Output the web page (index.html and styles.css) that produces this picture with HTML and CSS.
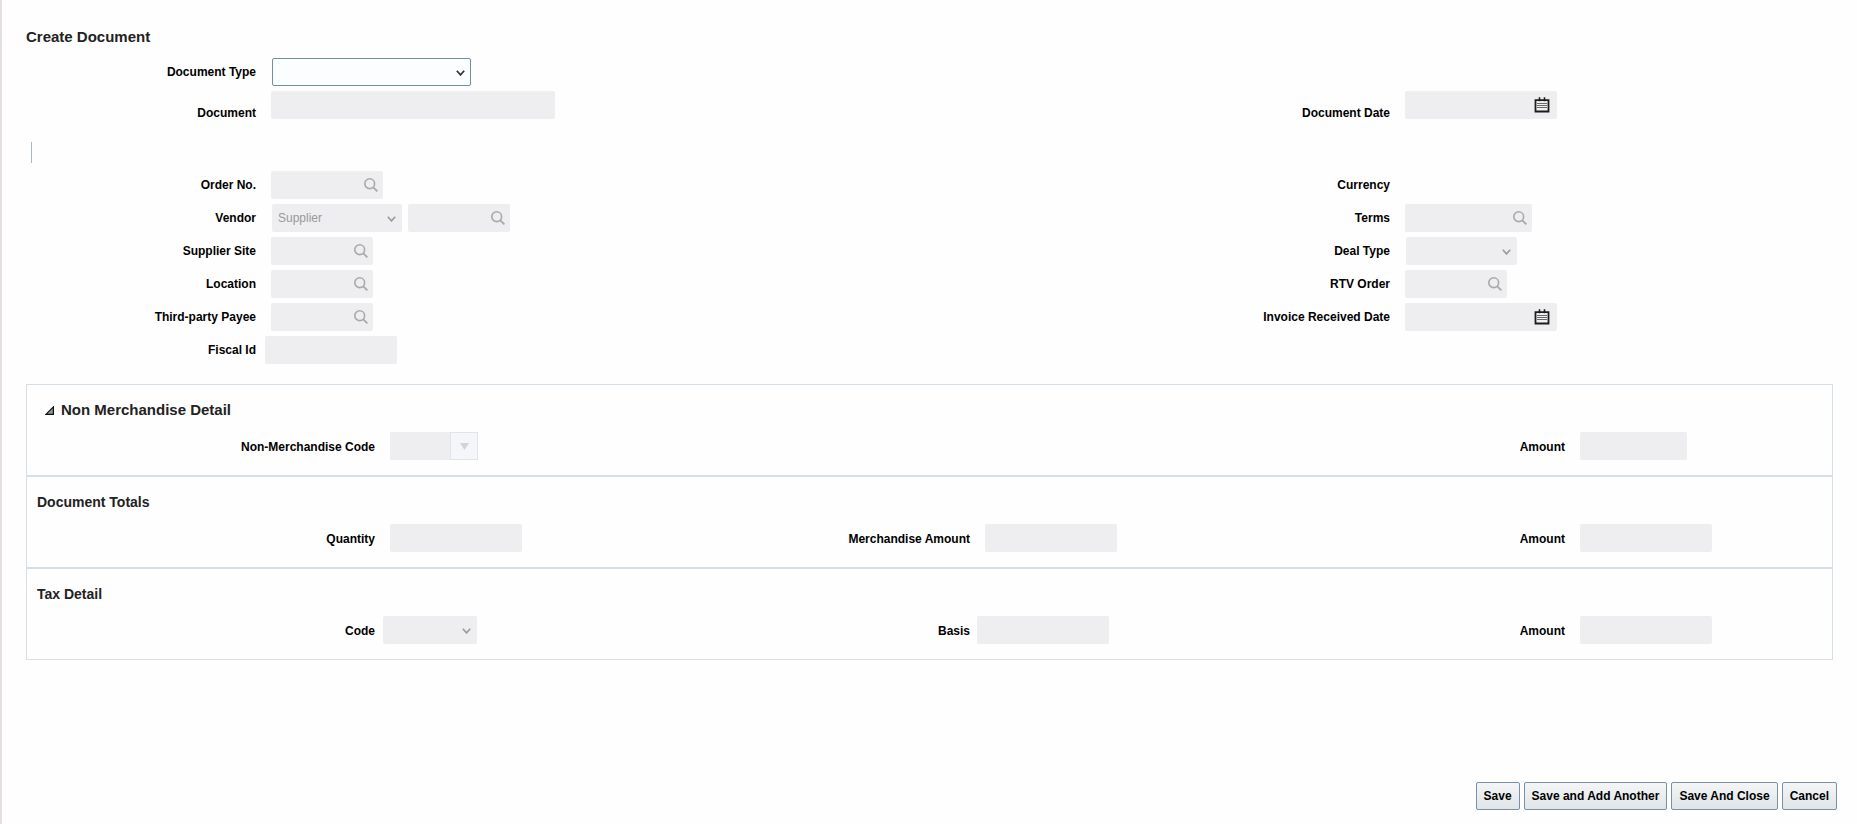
FILE: index.html
```html
<!DOCTYPE html>
<html lang="en">
<head>
<meta charset="utf-8">
<title>Create Document</title>
<link rel="stylesheet" href="styles.css">
</head>
<body>
<svg class="sprite" aria-hidden="true">
  <symbol id="search" viewBox="0 0 14 14"><circle cx="5.7" cy="5.7" r="4.9" fill="none" stroke="currentColor" stroke-width="1.6"/><path d="M9.3 9.3 13.4 13.4" stroke="currentColor" stroke-width="1.8"/></symbol>
  <symbol id="chevron" viewBox="0 0 9 6"><path d="M.8 .8 4.500 4.900 8.200 .8" fill="none" stroke="currentColor" stroke-width="1.7"/></symbol>
  <symbol id="calendar" viewBox="0 0 16 16"><path d="M1.500 3.200h13v11.300h-13z" fill="#f0f0f1" stroke="#1c1c1c" stroke-width="1.8"/><path d="M5.500 .3v4M10.500 .3v4" stroke="#1c1c1c" stroke-width="1.6"/><path d="M3 6.500h10M3 8.500h10M3 10.500h10" stroke="#6a6a6a" stroke-width="1.200"/></symbol>
</svg>
<form class="page">
  <main class="content">
    <h1 class="title">Create Document</h1>

    <div class="form-grid">
      <label class="label" for="doc-type">Document Type</label>
      <div class="cell"><span class="select w-199 active"><select id="doc-type"><option></option></select><svg class="chevron"><use href="#chevron"/></svg></span></div>
      <label class="label low col-3 row-2" for="doc-date">Document Date</label>
      <div class="cell row-2 col-4"><span class="field w-152"><input id="doc-date" type="text" disabled><button class="icon-btn date" type="button" aria-label="Select document date"><svg><use href="#calendar"/></svg></button></span></div>
      <label class="label low row-2 col-1" for="document">Document</label>
      <div class="cell row-2 col-2"><span class="field w-284"><input id="document" type="text" disabled></span></div>
    </div>

    <div class="marker"></div>

    <div class="form-grid">
      <label class="label" for="order">Order No.</label>
      <div class="cell"><span class="field w-112"><input id="order" type="text" disabled><button class="icon-btn" type="button" disabled aria-label="Search order"><svg><use href="#search"/></svg></button></span></div>
      <span class="label">Currency</span>
      <div class="cell"></div>

      <label class="label" for="vendor-type">Vendor</label>
      <div class="cell"><span class="select w-130"><select id="vendor-type" disabled><option>Supplier</option></select><svg class="chevron"><use href="#chevron"/></svg></span><span class="field w-102"><input type="text" aria-label="Vendor" disabled><button class="icon-btn" type="button" disabled aria-label="Search vendor"><svg><use href="#search"/></svg></button></span></div>
      <label class="label" for="terms">Terms</label>
      <div class="cell"><span class="field w-127"><input id="terms" type="text" disabled><button class="icon-btn" type="button" disabled aria-label="Search terms"><svg><use href="#search"/></svg></button></span></div>

      <label class="label" for="site">Supplier Site</label>
      <div class="cell"><span class="field w-102"><input id="site" type="text" disabled><button class="icon-btn" type="button" disabled aria-label="Search supplier site"><svg><use href="#search"/></svg></button></span></div>
      <label class="label" for="deal">Deal Type</label>
      <div class="cell"><span class="select w-111"><select id="deal" disabled><option></option></select><svg class="chevron"><use href="#chevron"/></svg></span></div>

      <label class="label" for="location">Location</label>
      <div class="cell"><span class="field w-102"><input id="location" type="text" disabled><button class="icon-btn" type="button" disabled aria-label="Search location"><svg><use href="#search"/></svg></button></span></div>
      <label class="label" for="rtv">RTV Order</label>
      <div class="cell"><span class="field w-102"><input id="rtv" type="text" disabled><button class="icon-btn" type="button" disabled aria-label="Search RTV order"><svg><use href="#search"/></svg></button></span></div>

      <label class="label" for="payee">Third-party Payee</label>
      <div class="cell"><span class="field w-102"><input id="payee" type="text" disabled><button class="icon-btn" type="button" disabled aria-label="Search third-party payee"><svg><use href="#search"/></svg></button></span></div>
      <label class="label" for="received">Invoice Received Date</label>
      <div class="cell"><span class="field w-152"><input id="received" type="text" disabled><button class="icon-btn date" type="button" aria-label="Select invoice received date"><svg><use href="#calendar"/></svg></button></span></div>

      <label class="label" for="fiscal">Fiscal Id</label>
      <div class="cell near"><span class="field w-132"><input id="fiscal" type="text" disabled></span></div>
    </div>

    <div class="panels">
      <section class="panel">
        <h2 class="panel-title collapsible"><button class="toggle" type="button" aria-expanded="true"><svg class="disclosure" viewBox="0 0 9 9"><path d="M8.4 .9V8.4H.9z" fill="#8f989d" stroke="#111" stroke-width="1.2"/></svg>Non Merchandise Detail</button></h2>
        <div class="panel-grid">
          <label class="label" for="nm-code">Non-Merchandise Code</label>
          <div class="cell"><span class="combo"><input id="nm-code" type="text" disabled><button class="combo-btn" type="button" disabled aria-label="Open codes"><svg viewBox="0 0 9 7"><path d="M0 0h9L4.500 7z" fill="#d2d4d7"/></svg></button></span></div>
          <label class="label col-5" for="nm-amount">Amount</label>
          <div class="cell"><span class="field w-107"><input id="nm-amount" type="text" disabled></span></div>
        </div>
      </section>
      <section class="panel">
        <h2 class="panel-title">Document Totals</h2>
        <div class="panel-grid">
          <label class="label" for="quantity">Quantity</label>
          <div class="cell"><span class="field w-132"><input id="quantity" type="text" disabled></span></div>
          <label class="label" for="merch">Merchandise Amount</label>
          <div class="cell"><span class="field w-132"><input id="merch" type="text" disabled></span></div>
          <label class="label" for="total-amount">Amount</label>
          <div class="cell"><span class="field w-132"><input id="total-amount" type="text" disabled></span></div>
        </div>
      </section>
      <section class="panel">
        <h2 class="panel-title">Tax Detail</h2>
        <div class="panel-grid">
          <label class="label" for="tax-code">Code</label>
          <div class="cell near"><span class="select w-94"><select id="tax-code" disabled><option></option></select><svg class="chevron"><use href="#chevron"/></svg></span></div>
          <label class="label" for="basis">Basis</label>
          <div class="cell near"><span class="field w-132"><input id="basis" type="text" disabled></span></div>
          <label class="label" for="tax-amount">Amount</label>
          <div class="cell"><span class="field w-132"><input id="tax-amount" type="text" disabled></span></div>
        </div>
      </section>
    </div>
  </main>
  <footer class="actions">
    <button class="btn" type="button">Save</button>
    <button class="btn" type="button">Save and Add Another</button>
    <button class="btn" type="button">Save And Close</button>
    <button class="btn" type="button">Cancel</button>
  </footer>
</form>
</body>
</html>
```
FILE: styles.css
```css
* { box-sizing: border-box; }
body {
  margin: 0;
  background: #fefefe;
  color: #000;
  font: 12px/14px "Liberation Sans", Arial, sans-serif;
}
input, select, button { font: inherit; color: inherit; margin: 0; }
.sprite { position: absolute; width: 0; height: 0; }

.page {
  display: flex;
  flex-direction: column;
  min-height: 100vh;
  border-left: 2px solid #e4dfdc;
}
.content { padding: 28px 24px 0; }
.title {
  margin: 0 0 12px;
  font-size: 15px;
  line-height: 18px;
  color: #222;
}

.form-grid {
  display: grid;
  grid-template-columns: minmax(0, 230fr) minmax(0, 904fr) minmax(0, 230fr) minmax(0, 443fr);
  grid-auto-rows: 28px;
  row-gap: 5px;
}
.panel-grid {
  display: grid;
  grid-template-columns: repeat(3, minmax(0, 338fr) minmax(0, 257fr));
  grid-auto-rows: 28px;
}
.label {
  align-self: center;
  justify-self: end;
  font-weight: bold;
  white-space: nowrap;
}
.label.low { align-self: end; line-height: 12px; }
.panel-grid .label { padding-top: 2px; }
.row-2 { grid-row: 2; }
.col-1 { grid-column: 1; }
.col-2 { grid-column: 2; }
.col-3 { grid-column: 3; }
.col-4 { grid-column: 4; }
.col-5 { grid-column: 5; }
.cell { display: flex; gap: 6px; padding-left: 15px; }
.cell.near { padding-left: 7px; }
.form-grid .near { padding-left: 9px; }

.field, .select { position: relative; display: block; height: 28px; }
.select { margin-left: 1px; }
.field input, .select select {
  display: block;
  width: 100%;
  height: 28px;
  padding: 0 6px;
  border: 0;
  border-radius: 2px;
  background: #eeeef0;
  color: #999;
  opacity: 1;
  appearance: none;
}
.select.active select {
  border: 1px solid #758e9b;
  background: #fcfdfe;
  color: #000;
}
.chevron {
  position: absolute;
  top: 12px;
  right: 6px;
  width: 9px;
  height: 6px;
  color: #9d9d9f;
  pointer-events: none;
}
.select.active .chevron { color: #333; }
.icon-btn {
  position: absolute;
  top: 7px;
  right: 5px;
  padding: 0;
  border: 0;
  background: none;
  color: #a9a9ab;
}
.icon-btn svg { display: block; width: 14px; height: 14px; }
.icon-btn.date { top: 6px; right: 7px; }
.icon-btn.date svg { width: 16px; height: 16px; }

.w-94 { width: 94px; }
.w-102 { width: 102px; }
.w-107 { width: 107px; }
.w-111 { width: 111px; }
.w-112 { width: 112px; }
.w-127 { width: 127px; }
.w-130 { width: 130px; }
.w-132 { width: 132px; }
.w-152 { width: 152px; }
.w-199 { width: 199px; }
.w-284 { width: 284px; }

.marker {
  width: 1px;
  height: 21px;
  margin: 23px 0 8px 5px;
  background: #a9b7c1;
}

.panels { margin-top: 20px; }
.panel {
  padding: 17px 10px 15px;
  border: 1px solid #d6dfe6;
}
.panel-title {
  margin: 0 0 14px;
  font-size: 14px;
  line-height: 16px;
  color: #222;
}
.panel-title.collapsible { padding-left: 8px; font-size: 15px; }
.toggle {
  display: flex;
  align-items: center;
  gap: 7px;
  padding: 0;
  border: 0;
  background: none;
}
.disclosure { width: 9px; height: 9px; }

.combo { display: flex; width: 88px; height: 28px; }
.combo input {
  flex: 1;
  min-width: 0;
  padding: 0 6px;
  border: 0;
  background: #eeeef0;
}
.combo-btn {
  display: flex;
  align-items: center;
  justify-content: center;
  width: 28px;
  padding: 0;
  border: 1px solid #dde5ed;
  background: #f5f6f9;
}
.combo-btn svg { width: 9px; height: 7px; }

.actions {
  display: flex;
  justify-content: flex-end;
  gap: 4px;
  margin-top: auto;
  padding: 20px 20px 14px;
}
.btn {
  height: 28px;
  padding: 0 7px;
  border: 1px solid #7891a8;
  border-radius: 2px;
  background: linear-gradient(#f3f5f6, #e1e5e8);
  font-weight: bold;
}
```
